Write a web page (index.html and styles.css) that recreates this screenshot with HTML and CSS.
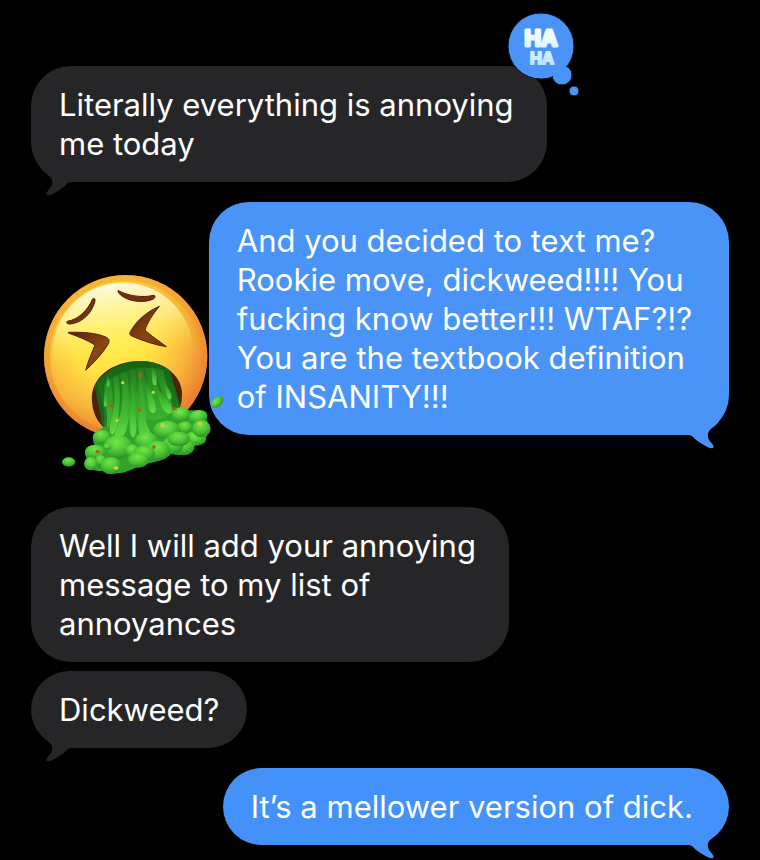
FILE: index.html
```html
<!DOCTYPE html>
<html lang="en">
<head>
	<meta charset="UTF-8">
	<meta name="viewport" content="width=device-width, initial-scale=1">
	<title>Messages</title>
	<link rel="stylesheet" href="styles.css">
</head>
<body>
	<svg class="defs" width="0" height="0" aria-hidden="true">
		<symbol id="tail" viewBox="0 0 48 48">
			<path d="M10 20 C12 23 14 25 17 27 C22 31 22 35 20 39 C18 42 14 45 16 47 C18 49 29 42 34 38 C36 36 37 34 42 34 L42 24 Z"/>
		</symbol>
	</svg>
	<main class="chat">
		<div class="row received">
			<div class="bubble">
				<p>Literally everything is annoying<br>me today</p>
				<svg class="tail" aria-hidden="true"><use href="#tail"/></svg>
				<svg class="reaction" viewBox="0 0 72 88">
					<defs>
						<linearGradient id="ice" x1="0" y1="0" x2="0" y2="1">
							<stop offset="0.2" stop-color="#f4ffff"/>
							<stop offset="1" stop-color="#b7e2fc"/>
						</linearGradient>
					</defs>
					<g class="cloud">
						<circle cx="34" cy="35" r="33"/>
						<circle cx="55" cy="64" r="10"/>
						<circle class="fill" cx="34" cy="35" r="32"/>
						<circle cx="67" cy="80" r="5"/>
					</g>
					<text class="ha"><tspan class="big" x="34" y="35">HA</tspan><tspan class="small" x="35" y="53">HA</tspan></text>
				</svg>
			</div>
		</div>

		<div class="row sent">
			<svg class="sticker" viewBox="0 0 600 660" aria-hidden="true">
				<defs>
					<radialGradient id="face" cx="0.42" cy="0.38" r="0.64">
						<stop offset="0" stop-color="#fff04d"/>
						<stop offset="0.4" stop-color="#ffe044"/>
						<stop offset="0.72" stop-color="#f8b43b"/>
						<stop offset="1" stop-color="#e9782c"/>
					</radialGradient>
					<linearGradient id="rim" x1="0" y1="0" x2="0" y2="1">
						<stop offset="0" stop-color="#f3a02c"/>
						<stop offset="1" stop-color="#e8792c"/>
					</linearGradient>
					<linearGradient id="shine" x1="0.35" y1="0" x2="0.5" y2="1">
						<stop offset="0" stop-color="#fffbe8"/>
						<stop offset="0.25" stop-color="#fff7a0" stop-opacity="0.75"/>
						<stop offset="0.55" stop-color="#ffee50" stop-opacity="0"/>
					</linearGradient>
					<linearGradient id="brown" x1="0" y1="0" x2="1" y2="1">
						<stop offset="0" stop-color="#57200a"/>
						<stop offset="0.6" stop-color="#8a4715"/>
						<stop offset="1" stop-color="#6b2c0c"/>
					</linearGradient>
					<linearGradient id="stream" x1="0" y1="0" x2="0" y2="1">
						<stop offset="0" stop-color="#1f741b"/>
						<stop offset="0.4" stop-color="#2f9d27"/>
						<stop offset="1" stop-color="#46c333"/>
					</linearGradient>
					<linearGradient id="drip" x1="0" y1="0" x2="0" y2="1">
						<stop offset="0" stop-color="#33a329" stop-opacity="0.2"/>
						<stop offset="0.6" stop-color="#43bb32"/>
						<stop offset="1" stop-color="#65dc43"/>
					</linearGradient>
					<radialGradient id="blob" cx="0.45" cy="0.3" r="0.7">
						<stop offset="0" stop-color="#74e64a"/>
						<stop offset="0.5" stop-color="#4fc937"/>
						<stop offset="1" stop-color="#2a9025"/>
					</radialGradient>
					<clipPath id="mouth">
						<path d="M186 424 C179 354 247 303 330 303 C403 303 466 350 455 420 C450 463 408 530 310 530 C225 530 189 481 186 424 Z"/>
					</clipPath>
				</defs>

				<circle cx="287" cy="290" r="245" fill="url(#face)"/>
				<circle cx="287" cy="290" r="236" fill="none" stroke="url(#rim)" stroke-width="18" opacity="0.5"/>
				<circle cx="279" cy="279" r="211" fill="url(#shine)"/>

				<g fill="#6e330f" stroke="#57200a" stroke-width="3" stroke-linejoin="round">
					<path d="M112 184 C146 178 172 152 188 117 C191 112 196 116 195 123 C187 158 158 188 121 192 C110 193 108 187 112 184 Z"/>
					<path d="M266 92 C290 106 336 115 370 106 C376 105 377 111 372 116 C341 132 288 125 266 99 C263 94 263 91 266 92 Z"/>
					<path d="M115 217 C158 216 198 218 229 232 C239 237 239 244 234 253 C216 283 190 309 167 331 C174 303 186 278 195 255 C170 239 142 229 115 219 Z" fill="url(#brown)"/>
					<path d="M388 139 C350 155 319 183 301 215 C297 223 301 227 310 230 C342 243 375 255 409 260 C386 242 364 228 345 211 C352 187 369 163 388 139 Z" fill="url(#brown)"/>
				</g>

				<path d="M186 424 C179 354 247 303 330 303 C403 303 466 350 455 420 C450 463 408 530 310 530 C225 530 189 481 186 424 Z" fill="#4b230b"/>
				<g clip-path="url(#mouth)">
					<path d="M194 375 C255 285 390 285 422 337 L453 442 L446 530 L220 530 C218 480 201 425 194 375 Z" fill="#176317"/>
				</g>
				<path d="M204 370 C250 306 370 290 414 328 C422 370 441 410 449 446 C458 480 475 510 465 530 L215 540 C236 470 210 415 204 370 Z" fill="url(#stream)"/>
				<path d="M204 370 C250 306 370 290 414 328 C422 370 441 410 449 446 L430 449 C417 398 406 362 400 331 C340 309 250 340 224 373 C221 419 237 463 229 506 L222 508 C225 455 210 413 204 370 Z" fill="#135618" opacity="0.6"/>

				<g fill="none" stroke="#176d1a" stroke-width="7" stroke-linecap="round" opacity="0.5">
					<path d="M246 352 C252 400 259 452 238 518"/>
					<path d="M268 340 C279 400 275 455 261 520"/>
					<path d="M293 328 C308 394 302 456 311 508"/>
					<path d="M318 319 C326 379 334 431 325 500"/>
					<path d="M341 316 C350 372 364 411 366 429"/>
					<path d="M368 317 C380 366 400 410 411 445"/>
				</g>

				<path d="M197 519 C222 490 272 500 291 481 C330 470 374 483 391 477 C426 468 440 439 473 452 C510 445 532 468 535 499 C543 528 519 549 486 548 C491 578 461 591 425 582 C390 610 360 605 326 619 C286 641 252 647 218 633 C186 636 157 615 170 594 C157 576 169 554 194 556 C186 542 189 528 197 519 Z" fill="#32a32a"/>
				<g fill="url(#drip)">
					<path d="M250 355 C268 350 267 412 265 467 C266 488 258 521 246 524 C230 517 251 459 253 420 Z"/>
					<path d="M277 360 C296 349 299 426 294 480 C293 522 267 553 252 530 C269 483 281 425 277 360 Z"/>
					<path d="M299 350 C315 373 312 415 314 444 C316 464 327 517 311 533 C289 525 307 454 299 350 Z"/>
					<path d="M324 331 C337 371 348 432 345 472 C353 510 374 526 362 556 C336 566 321 518 325 465 Z"/>
					<path d="M347 350 C360 391 381 433 378 450 C374 464 361 461 357 446 Z"/>
					<path d="M365 318 C381 331 382 363 378 374 C371 380 368 369 366 360 Z"/>
					<path d="M371 378 C391 391 426 430 426 452 C420 469 406 458 397 444 Z"/>
					<path d="M401 364 C415 381 429 407 423 417 C415 423 410 407 407 393 Z"/>
					<path d="M232 345 C241 363 240 378 235 381 C228 379 231 360 232 345 Z"/>
					<path d="M222 389 C233 409 233 435 226 442 C219 438 223 412 222 389 Z"/>
				</g>
				<g fill="url(#blob)">
					<ellipse cx="215" cy="531" rx="27" ry="21"/>
					<ellipse cx="453" cy="464" rx="29" ry="22"/>
					<ellipse cx="505" cy="470" rx="28" ry="20" transform="rotate(-8 505 470)"/>
					<ellipse cx="496" cy="536" rx="33" ry="22"/>
					<ellipse cx="514" cy="506" rx="28" ry="26"/>
					<ellipse cx="465" cy="502" rx="22" ry="18"/>
					<ellipse cx="410" cy="510" rx="40" ry="28"/>
					<ellipse cx="461" cy="559" rx="33" ry="27"/>
					<ellipse cx="430" cy="554" rx="31" ry="28"/>
					<ellipse cx="446" cy="537" rx="34" ry="22"/>
					<ellipse cx="349" cy="543" rx="34" ry="28"/>
					<ellipse cx="383" cy="572" rx="37" ry="30"/>
					<ellipse cx="264" cy="561" rx="43" ry="36"/>
					<ellipse cx="306" cy="572" rx="21" ry="20"/>
					<ellipse cx="344" cy="580" rx="31" ry="24"/>
					<ellipse cx="325" cy="600" rx="32" ry="23"/>
					<ellipse cx="196" cy="576" rx="31" ry="22"/>
					<ellipse cx="183" cy="611" rx="21" ry="20"/>
					<ellipse cx="211" cy="601" rx="15" ry="17"/>
					<ellipse cx="242" cy="617" rx="30" ry="26"/>
					<ellipse cx="232" cy="560" rx="12" ry="9"/>
					<ellipse cx="116" cy="606" rx="20" ry="14"/>
					<ellipse cx="562" cy="426" rx="21" ry="14" transform="rotate(-45 562 426)"/>
				</g>
				<g fill="#d9ca3f">
					<circle cx="278" cy="368" r="5"/>
					<circle cx="370" cy="397" r="5"/>
					<circle cx="261" cy="481" r="5"/>
					<ellipse cx="397" cy="496" rx="6" ry="7"/>
					<ellipse cx="258" cy="624" rx="8" ry="5"/>
					<ellipse cx="510" cy="491" rx="8" ry="5"/>
				</g>
				<g fill="#b35a1c">
					<ellipse cx="331" cy="345" rx="5" ry="9"/>
					<circle cx="244" cy="437" r="5"/>
					<circle cx="328" cy="450" r="5"/>
					<ellipse cx="434" cy="446" rx="7" ry="5"/>
					<ellipse cx="372" cy="561" rx="5" ry="6"/>
					<ellipse cx="203" cy="575" rx="7" ry="5"/>
				</g>
			</svg>
			<div class="bubble">
				<p>And you decided to text me?<br>Rookie move, dickweed!!!! You<br>fucking know better!!! WTAF?!?<br>You are the textbook definition<br>of INSANITY!!!</p>
				<svg class="tail" aria-hidden="true"><use href="#tail"/></svg>
			</div>
		</div>

		<div class="row received later">
			<div class="bubble">
				<p>Well I will add your annoying<br>message to my list of<br>annoyances</p>
			</div>
		</div>

		<div class="row received follow">
			<div class="bubble short">
				<p>Dickweed?</p>
				<svg class="tail" aria-hidden="true"><use href="#tail"/></svg>
			</div>
		</div>

		<div class="row sent">
			<div class="bubble latest">
				<p>It’s a mellower version of dick.</p>
				<svg class="tail" aria-hidden="true"><use href="#tail"/></svg>
			</div>
		</div>
	</main>
</body>
</html>
```
FILE: styles.css
```css
* {box-sizing: border-box;}
body {margin: 0; background: #000; color: #fff; font-family: Inter, "Liberation Sans", sans-serif; font-size: 31px; line-height: 39px;}
p {margin: 0; position: relative; z-index: 1;}
.defs {position: absolute;}

.chat {padding: 66px 31px 14px;}
.row {display: flex; position: relative; margin-top: 20px;}
.row:first-child {margin-top: 0;}
.row.sent {justify-content: flex-end;}
.row.later {margin-top: 72px;}
.row.follow {margin-top: 9px;}

.bubble {position: relative; padding: 19px 33px 19px 28px; border-radius: 40px; background: #262628; color: #fff; fill: #262628;}
.bubble.short {padding-right: 28px;}
.sent .bubble {padding-right: 37px; background: #4a94f8; fill: #4a94f8;}
.sent .bubble.latest {padding-right: 36px; background: #4391f9; fill: #4391f9;}

/* little hook under the outer corner */
.tail {position: absolute; left: 0; bottom: -14px; width: 48px; height: 48px;}
.sent .tail {left: auto; right: 0; transform: scaleX(-1);}

.reaction {position: absolute; z-index: 2; right: -32px; top: -55px; width: 72px; height: 88px;}
.cloud {fill: #4a94f8; stroke: #0b1524; stroke-width: 1px;}
.cloud .fill {stroke: none;}
.ha {fill: url(#ice); stroke: url(#ice); stroke-width: 3px; stroke-linejoin: round; font-weight: 700; text-anchor: middle;}
.big {font-size: 22px;}
.small {font-size: 16px; stroke-width: 2px;}

.sticker {position: absolute; z-index: 1; left: -1px; top: 58px; width: 200px; height: 220px;}
```
